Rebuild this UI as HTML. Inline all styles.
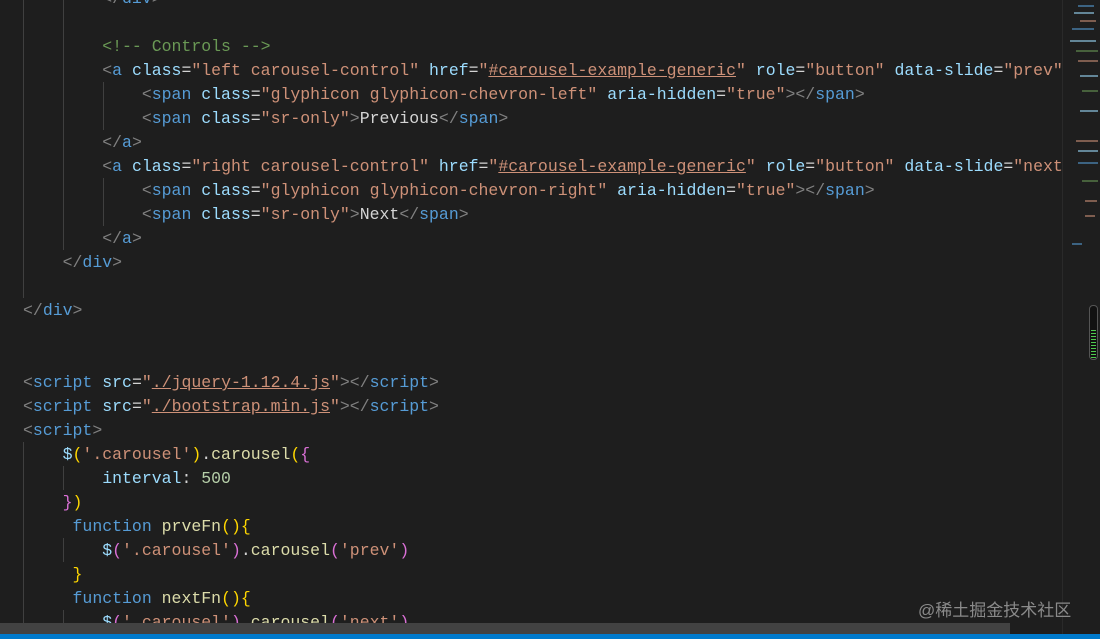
<!DOCTYPE html>
<html><head><meta charset="utf-8"><style>
body{margin:0;width:1100px;height:639px;background:#1e1e1e;overflow:hidden;position:relative;font-family:"Liberation Mono",monospace}
pre{position:absolute;left:23px;top:-13px;margin:0;font-family:"Liberation Mono","DejaVu Sans Mono",monospace;font-size:16.5px;line-height:24px;color:#d4d4d4;white-space:pre}
.g{color:#808080}.t{color:#569cd6}.a{color:#9cdcfe}.s{color:#ce9178}.c{color:#6a9955}.f{color:#dcdcaa}.n{color:#b5cea8}.y{color:#ffd700}.p{color:#da70d6}.u{text-decoration:underline;text-decoration-color:#ce9178}
.guide{position:absolute;width:1px;background:#404040}
.mm{position:absolute;height:2px;opacity:.55}
</style></head><body>
<div class="guide" style="left:23px;top:0;height:298px"></div>
<div class="guide" style="left:63px;top:0;height:250px"></div>
<div class="guide" style="left:103px;top:82px;height:48px"></div>
<div class="guide" style="left:103px;top:178px;height:48px"></div>
<div class="guide" style="left:23px;top:442px;height:190px"></div>
<div class="guide" style="left:63px;top:466px;height:24px"></div>
<div class="guide" style="left:63px;top:538px;height:24px"></div>
<div class="guide" style="left:63px;top:610px;height:24px"></div>
<pre>        <span class="g">&lt;/</span><span class="t">div</span><span class="g">&gt;</span>

        <span class="c">&lt;!-- Controls --&gt;</span>
        <span class="g">&lt;</span><span class="t">a</span> <span class="a">class</span>=<span class="s">"left carousel-control"</span> <span class="a">href</span>=<span class="s">"<span class="u">#carousel-example-generic</span>"</span> <span class="a">role</span>=<span class="s">"button"</span> <span class="a">data-slide</span>=<span class="s">"prev"</span>
            <span class="g">&lt;</span><span class="t">span</span> <span class="a">class</span>=<span class="s">"glyphicon glyphicon-chevron-left"</span> <span class="a">aria-hidden</span>=<span class="s">"true"</span><span class="g">&gt;&lt;/</span><span class="t">span</span><span class="g">&gt;</span>
            <span class="g">&lt;</span><span class="t">span</span> <span class="a">class</span>=<span class="s">"sr-only"</span><span class="g">&gt;</span>Previous<span class="g">&lt;/</span><span class="t">span</span><span class="g">&gt;</span>
        <span class="g">&lt;/</span><span class="t">a</span><span class="g">&gt;</span>
        <span class="g">&lt;</span><span class="t">a</span> <span class="a">class</span>=<span class="s">"right carousel-control"</span> <span class="a">href</span>=<span class="s">"<span class="u">#carousel-example-generic</span>"</span> <span class="a">role</span>=<span class="s">"button"</span> <span class="a">data-slide</span>=<span class="s">"next"</span>
            <span class="g">&lt;</span><span class="t">span</span> <span class="a">class</span>=<span class="s">"glyphicon glyphicon-chevron-right"</span> <span class="a">aria-hidden</span>=<span class="s">"true"</span><span class="g">&gt;&lt;/</span><span class="t">span</span><span class="g">&gt;</span>
            <span class="g">&lt;</span><span class="t">span</span> <span class="a">class</span>=<span class="s">"sr-only"</span><span class="g">&gt;</span>Next<span class="g">&lt;/</span><span class="t">span</span><span class="g">&gt;</span>
        <span class="g">&lt;/</span><span class="t">a</span><span class="g">&gt;</span>
    <span class="g">&lt;/</span><span class="t">div</span><span class="g">&gt;</span>

<span class="g">&lt;/</span><span class="t">div</span><span class="g">&gt;</span>


<span class="g">&lt;</span><span class="t">script</span> <span class="a">src</span>=<span class="s">"<span class="u">./jquery-1.12.4.js</span>"</span><span class="g">&gt;&lt;/</span><span class="t">script</span><span class="g">&gt;</span>
<span class="g">&lt;</span><span class="t">script</span> <span class="a">src</span>=<span class="s">"<span class="u">./bootstrap.min.js</span>"</span><span class="g">&gt;&lt;/</span><span class="t">script</span><span class="g">&gt;</span>
<span class="g">&lt;</span><span class="t">script</span><span class="g">&gt;</span>
    <span class="a">$</span><span class="y">(</span><span class="s">'.carousel'</span><span class="y">)</span>.<span class="f">carousel</span><span class="y">(</span><span class="p">{</span>
        <span class="a">interval</span>: <span class="n">500</span>
    <span class="p">}</span><span class="y">)</span>
     <span class="t">function</span> <span class="f">prveFn</span><span class="y">(){</span>
        <span class="a">$</span><span class="p">(</span><span class="s">'.carousel'</span><span class="p">)</span>.<span class="f">carousel</span><span class="p">(</span><span class="s">'prev'</span><span class="p">)</span>
     <span class="y">}</span>
     <span class="t">function</span> <span class="f">nextFn</span><span class="y">(){</span>
        <span class="a">$</span><span class="p">(</span><span class="s">'.carousel'</span><span class="p">)</span>.<span class="f">carousel</span><span class="p">(</span><span class="s">'next'</span><span class="p">)</span></pre>
<div style="position:absolute;left:1062px;top:0;width:1px;height:634px;background:#2a2a2a"></div>
<div style="position:absolute;left:1063px;top:0;width:37px;height:634px;background:#1e1e1e"></div>
<div class="mm" style="left:1078px;top:5px;width:16px;background:#569cd6"></div>
<div class="mm" style="left:1074px;top:12px;width:20px;background:#9cdcfe"></div>
<div class="mm" style="left:1080px;top:20px;width:16px;background:#ce9178"></div>
<div class="mm" style="left:1072px;top:28px;width:22px;background:#569cd6"></div>
<div class="mm" style="left:1070px;top:40px;width:26px;background:#9cdcfe"></div>
<div class="mm" style="left:1076px;top:50px;width:22px;background:#6a9955"></div>
<div class="mm" style="left:1078px;top:60px;width:20px;background:#ce9178"></div>
<div class="mm" style="left:1080px;top:75px;width:18px;background:#9cdcfe"></div>
<div class="mm" style="left:1082px;top:90px;width:16px;background:#6a9955"></div>
<div class="mm" style="left:1080px;top:110px;width:18px;background:#9cdcfe"></div>
<div class="mm" style="left:1076px;top:140px;width:22px;background:#ce9178"></div>
<div class="mm" style="left:1078px;top:150px;width:20px;background:#9cdcfe"></div>
<div class="mm" style="left:1078px;top:162px;width:20px;background:#569cd6"></div>
<div class="mm" style="left:1082px;top:180px;width:16px;background:#6a9955"></div>
<div class="mm" style="left:1085px;top:200px;width:12px;background:#ce9178"></div>
<div class="mm" style="left:1085px;top:215px;width:10px;background:#ce9178"></div>
<div class="mm" style="left:1072px;top:243px;width:10px;background:#569cd6"></div>
<div style="position:absolute;left:1089px;top:305px;width:9px;height:55px;border:1px solid #555;border-radius:4px;background:#111;box-sizing:border-box"></div>
<div style="position:absolute;left:1091px;top:330px;width:5px;height:28px;background:repeating-linear-gradient(#4ec94e 0 1px,#111 1px 3px)"></div>
<div style="position:absolute;left:918px;top:596px;font-family:'Liberation Sans','Noto Sans CJK SC',sans-serif;font-size:17px;color:#8a8a8a">@稀土掘金技术社区</div>
<div style="position:absolute;left:0;top:623px;width:1010px;height:11px;background:#424242"></div>
<div style="position:absolute;left:0;top:634px;width:1100px;height:5px;background:#007acc"></div>
</body></html>
